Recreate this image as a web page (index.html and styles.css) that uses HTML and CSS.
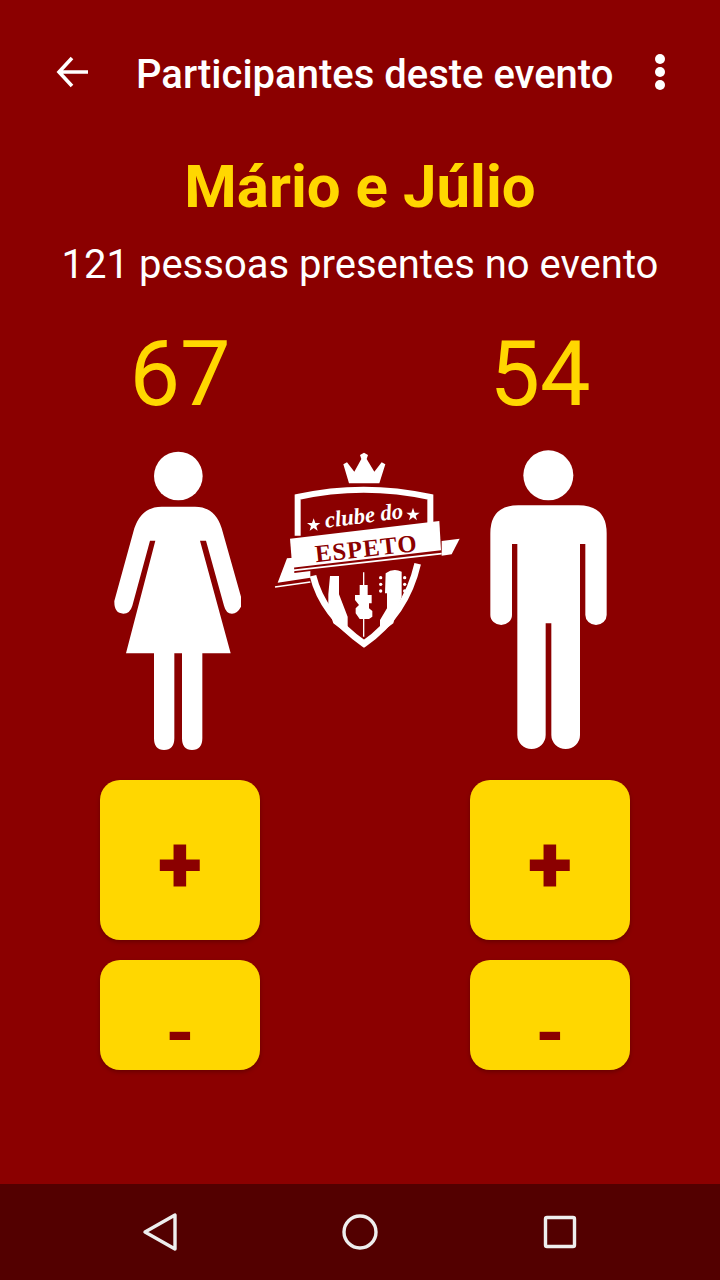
FILE: index.html
```html
<!DOCTYPE html>
<html lang="en">
<head>
<meta charset="UTF-8">
<meta name="viewport" content="width=device-width, initial-scale=1.0">
<title>Participantes deste evento</title>
<link rel="stylesheet" href="styles.css">
</head>
<body>
  <div class="screen">
    <header class="toolbar">
      <svg class="back-icon" viewBox="0 0 36 36"><path d="M33 18H4M17 4L4 18l13 14" fill="none" stroke="#fff" stroke-width="3.6"/></svg>
      <h1 class="toolbar-title">Participantes deste evento</h1>
      <svg class="more-icon" viewBox="0 0 12 36"><circle cx="6" cy="5" r="5"/><circle cx="6" cy="18" r="5"/><circle cx="6" cy="31" r="5"/></svg>
    </header>

    <main class="content">
      <h2 class="event-name">Mário e Júlio</h2>
      <p class="total">121 pessoas presentes no evento</p>

      <div class="counts">
        <span class="count">67</span>
        <span class="count">54</span>
      </div>

      <div class="figures">
        <svg class="woman" viewBox="0 0 480 960">
          <circle cx="235" cy="108" r="73"/>
          <path d="M185 200H285Q345 200 365 265L423 470V500Q412 521 396 521Q378 521 372 497L318 302H300L392 640H307V895Q307 930 276 930Q246 930 246 895V640H223V895Q223 930 192 930Q162 930 162 895V640H78L166 302H150L97 497Q90 521 70 521Q42 521 43 483L103 265Q125 200 185 200Z"/>
        </svg>

        <svg class="logo" viewBox="0 0 615 630">
          <path class="fill" d="M252 115L235 58L246 52L268 80L289 42L285 30L297 23L309 30L305 42L328 80L350 52L361 58L343 115Z"/>
          <path class="line" d="M98 272V156Q295 112 496 156V238" stroke-width="18"/>
          <path class="fill" d="M530 288L584 281L560 328L530 332Z"/>
          <path class="fill" d="M66 340L86 338L88 384L136 378V398L38 413Z"/>
          <path class="fill" d="M75 281L523 228L528 316L82 368Z"/>
          <path class="line" d="M85 376L530 326" stroke-width="5"/>
          <path class="line" d="M30 426L136 411" stroke-width="5"/>
          <path class="line" d="M144 392Q172 508 297 596Q423 508 458 356" stroke-width="20"/>
          <path class="fill" d="M195 393H222V448L248 515V568L205 535L190 490V448Z"/>
          <path class="line" d="M296 382V575" stroke-width="4"/>
          <path class="fill" d="M284 420H308V450H320V475H312V490L322 498V515L312 522H284L272 505V490L282 480L270 465V450H284Z"/>
          <path class="fill" d="M362 385Q385 368 410 380V455L395 495L385 535L345 565V525L366 490V445H360Z"/>
          <g class="fill">
            <circle cx="347" cy="398" r="5"/><circle cx="347" cy="418" r="5"/><circle cx="347" cy="438" r="5"/>
            <circle cx="419" cy="398" r="5"/><circle cx="419" cy="418" r="5"/><circle cx="419" cy="438" r="5"/>
            <path d="M146 220L151 234L166 234L154 243L158 257L146 249L134 257L138 243L126 234L141 234Z"/>
            <path d="M444 188L449 203L464 203L452 212L456 226L444 217L432 226L436 212L424 203L439 203Z"/>
          </g>
          <text class="logo-script" x="182" y="248" transform="rotate(-7 182 248)">clube do</text>
          <text class="logo-name" x="153" y="352" transform="rotate(-6.3 153 352)">ESPETO</text>
        </svg>

        <svg class="man" viewBox="0 0 420 960">
          <circle cx="205" cy="106" r="75"/>
          <path d="M115 196H295Q380 196 380 280V525A32 30 0 0 1 316 525V312H300V885A43 42 0 0 1 214 885V550H197V885A42.5 42 0 0 1 112 885V312H96V525A32.5 30 0 0 1 31 525V280Q31 196 115 196Z"/>
        </svg>
      </div>

      <div class="buttons">
        <div class="button-column">
          <button class="counter-btn plus">+</button>
          <button class="counter-btn minus">-</button>
        </div>
        <div class="button-column">
          <button class="counter-btn plus">+</button>
          <button class="counter-btn minus">-</button>
        </div>
      </div>
    </main>

    <nav class="navbar">
      <svg class="nav-icon" viewBox="0 0 36 40"><path d="M33 3V37L3 20Z" fill="none" stroke="#eee" stroke-width="3.4" stroke-linejoin="round"/></svg>
      <svg class="nav-icon" viewBox="0 0 36 40"><circle cx="18" cy="20" r="16" fill="none" stroke="#eee" stroke-width="3.4"/></svg>
      <svg class="nav-icon" viewBox="0 0 36 40"><rect x="3.500" y="5.500" width="29" height="29" rx="1.500" fill="none" stroke="#eee" stroke-width="3.400"/></svg>
    </nav>
  </div>
</body>
</html>
```

FILE: styles.css
```css
body {
  margin: 0;
  font-family: Roboto, sans-serif;
}
.screen {
  width: 720px;
  height: 1280px;
  display: flex;
  flex-direction: column;
  background: #8b0000;
  color: #fff;
  overflow: hidden;
}
.toolbar {
  height: 144px;
  flex: none;
  box-sizing: border-box;
  padding: 0 54px 0 55px;
  display: flex;
  align-items: center;
}
.back-icon {
  width: 36px;
  height: 36px;
}
.more-icon {
  width: 12px;
  height: 36px;
  fill: #fff;
}
.toolbar-title {
  flex: 1;
  margin: 0 0 0 45px;
  padding-top: 4px;
  font-size: 40px;
  font-weight: 500;
}
.content {
  flex: 1;
  text-align: center;
}
.event-name {
  margin: 8px 0 0;
  font-size: 60px;
  line-height: 70px;
  font-weight: 700;
  color: #ffd700;
}
.total {
  margin: 20px 0 0;
  font-size: 40px;
  line-height: 46px;
}
.counts {
  display: flex;
  margin-top: 35px;
  padding: 0 90px 0 90px;
  justify-content: space-between;
}
.count {
  width: 180px;
  font-size: 90px;
  line-height: 104px;
  color: #ffd700;
}
.figures {
  display: flex;
  align-items: flex-start;
  height: 320px;
  margin-top: 13px;
  padding-left: 100px;
  fill: #fff;
}
.woman {
  width: 160px;
  height: 320px;
}
.man {
  width: 140px;
  height: 320px;
  margin-left: 10px;
}
.logo {
  width: 205px;
  height: 210px;
  margin: 5px 0 0 5px;
}
.logo .fill {
  fill: #fff;
}
.logo .line {
  fill: none;
  stroke: #fff;
}
.logo-script {
  font-family: "Liberation Serif", serif;
  font-style: italic;
  font-weight: 700;
  font-size: 68px;
  fill: #fff;
}
.logo-name {
  font-family: "Liberation Serif", serif;
  font-weight: 700;
  font-size: 74px;
  letter-spacing: 3px;
  fill: #8b0000;
}
.buttons {
  display: flex;
  justify-content: space-between;
  padding: 0 90px 0 100px;
  margin-top: 20px;
}
.button-column {
  display: flex;
  flex-direction: column;
  gap: 20px;
}
.counter-btn {
  width: 160px;
  border: none;
  border-radius: 20px;
  padding: 0;
  background: #ffd700;
  color: #8b0000;
  font-family: Roboto, sans-serif;
  font-weight: 700;
  box-shadow: 0 2px 4px rgba(0, 0, 0, 0.25);
}
.plus {
  height: 160px;
  padding-top: 8px;
  font-size: 82px;
  font-weight: 900;
}
.minus {
  height: 110px;
  font-size: 74px;
  padding-top: 30px;
}
.navbar {
  height: 96px;
  flex: none;
  display: flex;
  justify-content: center;
  align-items: center;
  gap: 164px;
  background: #530000;
}
.nav-icon {
  width: 36px;
  height: 40px;
}
```
